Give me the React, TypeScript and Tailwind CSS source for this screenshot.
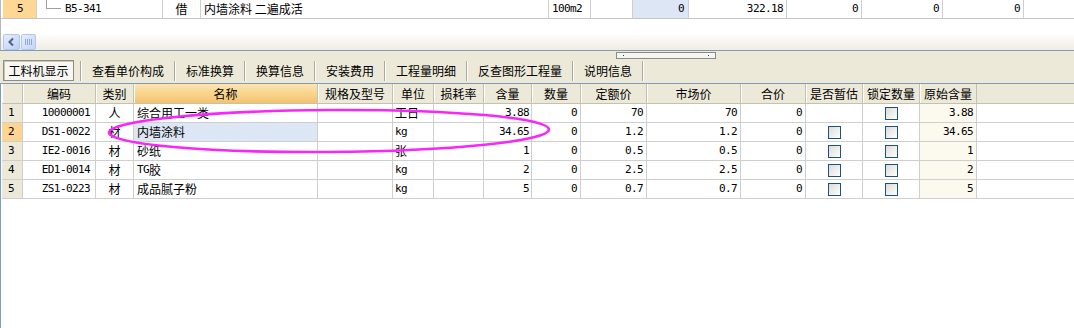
import React from "react";

const cjk = "font-['Noto_Sans_CJK_SC',sans-serif]";
const mono = "font-['DejaVu_Sans_Mono','Noto_Sans_CJK_SC',monospace] text-[11px] tracking-[-0.6px]";

const widths = [21, 73, 38, 184, 75, 41, 50, 48, 49, 66, 94, 65, 57, 57, 57];
const headers = ["", "编码", "类别", "名称", "规格及型号", "单位", "损耗率", "含量", "数量", "定额价", "市场价", "合价", "是否暂估", "锁定数量", "原始含量"];

type Row = {
  code: string;
  kind: string;
  name: React.ReactNode;
  unit: string;
  unitLatin?: boolean;
  qty: string;
  quota: string;
  market: string;
  est: boolean;
  orig: string;
};

const rows: Row[] = [
  { code: "10000001", kind: "人", name: "综合用工一类", unit: "工日", qty: "3.88", quota: "70", market: "70", est: false, orig: "3.88" },
  { code: "DS1-0022", kind: "材", name: "内墙涂料", unit: "kg", unitLatin: true, qty: "34.65", quota: "1.2", market: "1.2", est: true, orig: "34.65" },
  { code: "IE2-0016", kind: "材", name: "砂纸", unit: "张", qty: "1", quota: "0.5", market: "0.5", est: true, orig: "1" },
  {
    code: "ED1-0014",
    kind: "材",
    name: (
      <>
        <span className={mono}>TG</span>胶
      </>
    ),
    unit: "kg",
    unitLatin: true,
    qty: "2",
    quota: "2.5",
    market: "2.5",
    est: true,
    orig: "2",
  },
  { code: "ZS1-0223", kind: "材", name: "成品腻子粉", unit: "kg", unitLatin: true, qty: "5", quota: "0.7", market: "0.7", est: true, orig: "5" },
];

function Check() {
  return <span className="block h-[13px] w-[13px] border border-[#1c5180] bg-gradient-to-br from-[#dcdbd5] to-white" />;
}

function Cell({ w, className = "", children }: { w: number; className?: string; children?: React.ReactNode }) {
  return (
    <div style={{ width: w }} className={`flex h-full shrink-0 items-center overflow-hidden whitespace-nowrap border-r border-[#cfcfcf] ${className}`}>
      {children}
    </div>
  );
}

const tabs = ["查看单价构成", "标准换算", "换算信息", "安装费用", "工程量明细", "反查图形工程量", "说明信息"];

function Sep() {
  return <div className="h-[20px] w-[2px] shrink-0 border-l border-[#aca899] bg-white" />;
}

export default function App() {
  return (
    <div className={`relative h-[328px] w-[1074px] overflow-hidden bg-white text-[12px] text-black ${cjk}`}>
      {/* upper grid remainder */}
      <div className="border-l border-[#b8b8b8]">
        <div className="flex h-[19px] border-b border-[#c4c4c4] pl-[2px]">
          <Cell w={34} className="bg-[#fdd793] pl-[14px] text-[11px]">
            <span className={mono}>5</span>
          </Cell>
          <Cell w={126} className="relative">
            <span className="ml-[9px] mr-[4px] h-[9px] w-[15px] self-start border-b border-l border-[#a0a0a0]" />
            <span className={mono}>B5-341</span>
          </Cell>
          <Cell w={38} className="justify-center">借</Cell>
          <Cell w={348} className="pl-[3px]">内墙涂料 二遍成活</Cell>
          <Cell w={42} className="pl-[3px]">
            <span className={mono}>100m2</span>
          </Cell>
          <Cell w={42} />
          <Cell w={56} className="justify-end bg-[#dde6f4] pr-[4px]">
            <span className={mono}>0</span>
          </Cell>
          <Cell w={98} className="justify-end pr-[3px]">
            <span className={mono}>322.18</span>
          </Cell>
          <Cell w={75} className="justify-end pr-[3px]">
            <span className={mono}>0</span>
          </Cell>
          <Cell w={81} className="justify-end pr-[3px]">
            <span className={mono}>0</span>
          </Cell>
          <Cell w={81} className="justify-end pr-[3px]">
            <span className={mono}>0</span>
          </Cell>
        </div>
        <div className="h-[14px]" />
        <div className="flex h-[17px] items-start bg-gradient-to-b from-white to-[#efede3] pl-[2px] pt-[1px]">
          <div className="flex h-[16px] w-[17px] items-center justify-center rounded-[2px] border border-[#b3c6ee] bg-gradient-to-br from-[#e6eefc] to-[#bccff6]">
            <svg width="9" height="10" viewBox="0 0 9 10">
              <path d="M6 1.5 L2.5 5 L6 8.5" fill="none" stroke="#4d6185" strokeWidth="2" />
            </svg>
          </div>
          <div className="ml-px flex h-[16px] w-[15px] items-center justify-center gap-px rounded-[2px] border border-[#b3c6ee] bg-gradient-to-br from-[#e6eefc] to-[#c4d5f8]">
            <span className="h-[6px] w-px bg-[#8ea6d8]" />
            <span className="h-[6px] w-px bg-[#8ea6d8]" />
            <span className="h-[6px] w-px bg-[#8ea6d8]" />
            <span className="h-[6px] w-px bg-[#8ea6d8]" />
          </div>
        </div>
      </div>
      <div className="h-px bg-[#7f9db9]" />

      {/* tab bar */}
      <div className="h-[32px] bg-[#ece9d8]">
        <div className="h-[9px] pt-px">
          <div className="relative ml-[616px] h-[7px] w-[100px] border border-[#8a8a8a] bg-[#f6f5f0]">
            <span className="absolute left-[6px] top-[2px] h-px w-px bg-[#1f3a8a]" />
            <span className="absolute right-[6px] top-[2px] h-px w-px bg-[#1f3a8a]" />
          </div>
        </div>
        <div className="flex h-[21px] items-center">
          <div className="ml-[3px] flex h-[21px] w-[71px] items-center justify-center border border-[#8f8d83] bg-[#f7f6f1] shadow-[inset_1px_1px_0_#c9c6b8]">
            工料机显示
          </div>
          <div className="w-[6px]" />
          <Sep />
          {tabs.map((t) => (
            <React.Fragment key={t}>
              <div className="shrink-0 px-[10px]">{t}</div>
              <Sep />
            </React.Fragment>
          ))}
        </div>
      </div>

      {/* grid */}
      <div className="h-[245px] border-l border-t border-[#7f9db9] pl-px">
        <div className="flex h-[20px] border-b border-[#c4c1b1] bg-[#ece9d8]">
          {headers.map((h, i) => (
            <div
              key={i}
              style={{ width: widths[i] }}
              className={`flex h-full shrink-0 items-center justify-center whitespace-nowrap border-r border-[#c4c1b1] shadow-[inset_1px_0_0_#ffffff] ${
                h === "名称" ? "bg-gradient-to-b from-[#fde5b0] to-[#f4c36c]" : ""
              }`}
            >
              {h}
            </div>
          ))}
        </div>
        {rows.map((r, i) => (
          <div key={i} className="flex h-[19px] border-b border-[#cfcfcf]">
            <Cell w={widths[0]} className={`pl-[6px] ${i === 1 ? "bg-[#fdd591]" : "bg-[#ece9d8]"}`}>
              <span className={mono}>{i + 1}</span>
            </Cell>
            <Cell w={widths[1]} className="justify-end pr-[5px]">
              <span className={mono}>{r.code}</span>
            </Cell>
            <Cell w={widths[2]} className="justify-center">{r.kind}</Cell>
            <Cell w={widths[3]} className={`pl-[3px] ${i === 1 ? "bg-[#dde6f4]" : ""}`}>{r.name}</Cell>
            <Cell w={widths[4]} />
            <Cell w={widths[5]} className="pl-[2px]">
              {r.unitLatin ? <span className={mono}>{r.unit}</span> : r.unit}
            </Cell>
            <Cell w={widths[6]} />
            <Cell w={widths[7]} className="justify-end pr-[2px]">
              <span className={mono}>{r.qty}</span>
            </Cell>
            <Cell w={widths[8]} className="justify-end pr-[3px]">
              <span className={mono}>0</span>
            </Cell>
            <Cell w={widths[9]} className="justify-end pr-[3px]">
              <span className={mono}>{r.quota}</span>
            </Cell>
            <Cell w={widths[10]} className="justify-end pr-[3px]">
              <span className={mono}>{r.market}</span>
            </Cell>
            <Cell w={widths[11]} className="justify-end pr-[3px]">
              <span className={mono}>0</span>
            </Cell>
            <Cell w={widths[12]} className="justify-center">{r.est ? <Check /> : null}</Cell>
            <Cell w={widths[13]} className="justify-center">
              <Check />
            </Cell>
            <Cell w={widths[14]} className="justify-end bg-[#fcf9ef] pr-[3px]">
              <span className={mono}>{r.orig}</span>
            </Cell>
          </div>
        ))}
      </div>

      {/* hand-drawn annotation */}
      <svg className="pointer-events-none absolute left-0 top-0" width="1074" height="328" viewBox="0 0 1074 328">
        <ellipse cx="329" cy="131" rx="220" ry="21" fill="none" stroke="#f826f8" strokeWidth="2.6" transform="rotate(-0.4 329 131)" />
      </svg>
    </div>
  );
}
